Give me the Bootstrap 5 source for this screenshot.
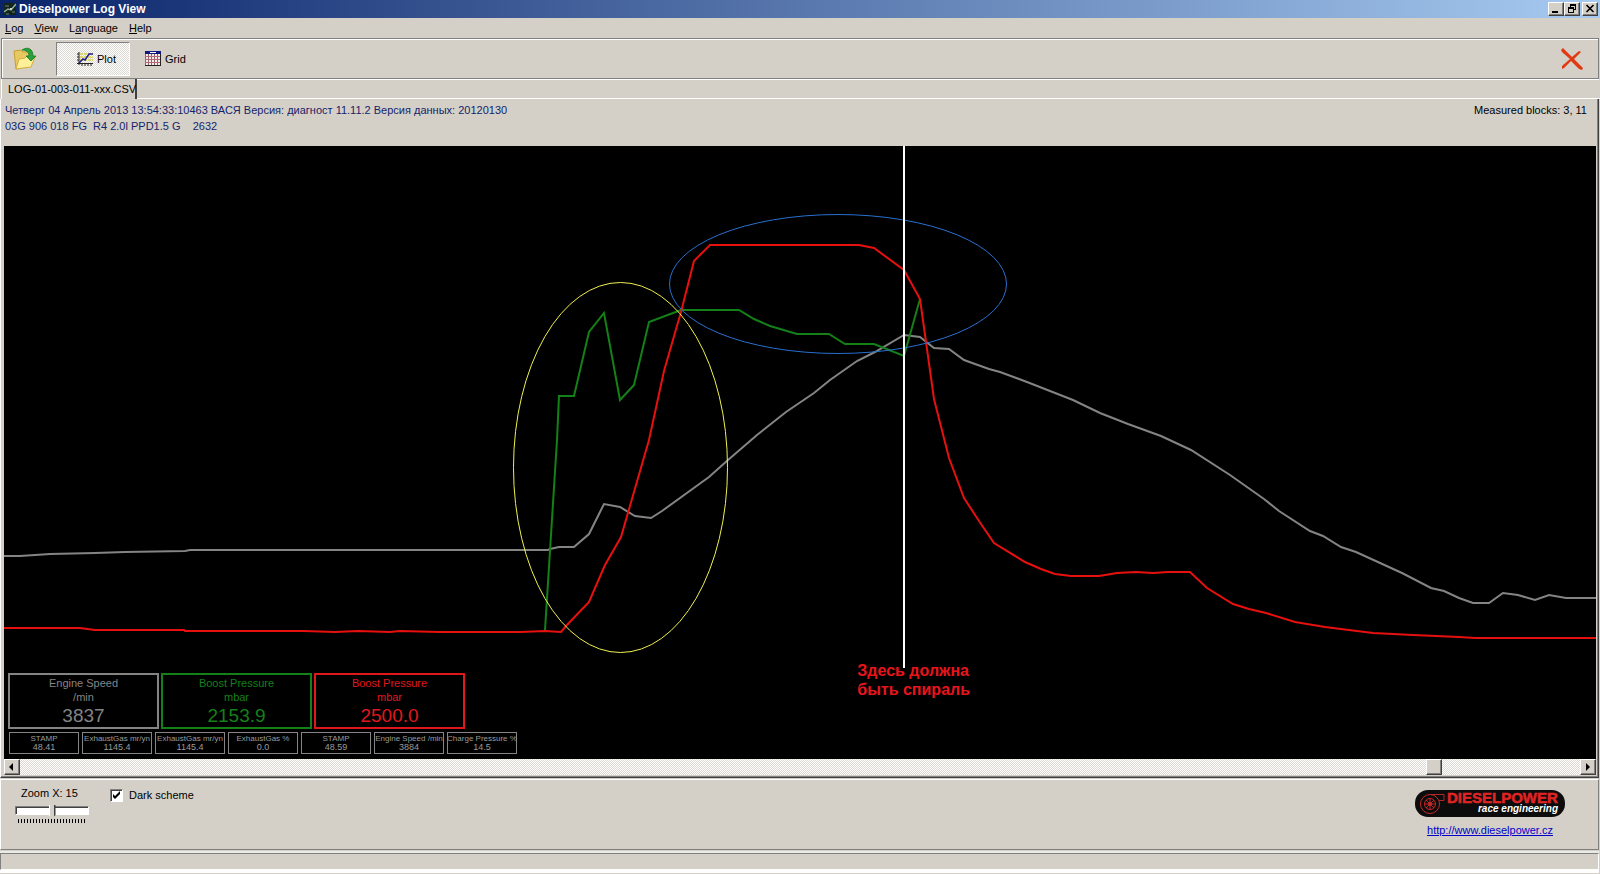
<!DOCTYPE html>
<html lang="en">
<head>
<meta charset="utf-8">
<meta name="viewport" content="width=device-width, initial-scale=1">
<title>Dieselpower Log View</title>
<link href="https://cdn.jsdelivr.net/npm/bootstrap@5.3.0/dist/css/bootstrap.min.css" rel="stylesheet">
<style>
  :root { --face:#d4d0c8; --shade:#808080; --dark:#404040; --navy:#14246a; }
  body { background:var(--face); color:#000; font:11px/16px "Liberation Sans", Arial, sans-serif; }
  button { font:inherit; color:inherit; }
  .titlebar { height:18px; padding:0 2px 0 4px; gap:3px; background:linear-gradient(90deg,#0a246a,#a6caf0); color:#fff; }
  .titlebar h1 { font-size:12px; line-height:18px; font-weight:700; margin:0; }
  .raised { background:var(--face); border:1px solid; border-color:#fff var(--dark) var(--dark) #fff; box-shadow:inset -1px -1px 0 var(--shade); padding:0; border-radius:0; }
  .winbtn { width:16px; height:14px; }
  .winbtn:last-child { margin-left:2px; }
  .menubar { height:20px; padding:0 5px; gap:11px; }
  .menubar a { color:#000; text-decoration:none; line-height:20px; }
  .toolbar { height:41px; margin:0 1px; padding:2px 13px 1px 10px; border:1px solid var(--shade); box-shadow:inset 1px 1px 0 #fff, 0 1px 0 #fff; }
  .toolbtn { height:34px; border:1px solid transparent; background:none; padding:0; gap:4px; }
  .dither { background:repeating-conic-gradient(#fff 0 25%, #dcd9d2 0 50%) 0 0/2px 2px; }
  .toolbtn.pressed { width:74px; margin-left:18px; border-color:var(--shade) #fff #fff var(--shade); }
  .toolbtn.other { margin-left:14px; }
  .tabs { height:20px; padding-left:1px; }
  .filetab { height:20px; width:136px; padding:0 0 0 6px; border:0; border-right:2px solid var(--dark); border-left:1px solid #fff; background:var(--face); text-align:left; line-height:20px; white-space:nowrap; }
  .tabrest { border-bottom:1px solid #fff; }
  .page { padding:0 2px 2px 3px; margin-right:1px; border-left:1px solid #fff; border-right:1px solid var(--dark); border-bottom:1px solid var(--dark); box-shadow:inset -1px -1px 0 var(--shade); }
  .info { height:47px; padding:3px 9px 0 1px; }
  .info pre { font:inherit; color:var(--navy); margin:0; overflow:visible; }
  .plot { background:#000; min-height:400px; overflow:hidden; }
  .plot polyline, .plot ellipse, .plot line { fill:none; vector-effect:non-scaling-stroke; stroke-width:2; }
  .plot ellipse { stroke-width:1; }
  .remark { left:53.6%; top:84%; color:#e8141c; font-size:16px; line-height:19px; font-weight:700; white-space:nowrap; }
  .readouts { left:4px; bottom:5px; gap:3px; }
  .gauges { gap:2px; }
  .minis { gap:3px; padding-left:1px; }
  .gauge { width:151px; height:56px; border:2px solid; text-align:center; line-height:14px; padding-top:1px; }
  .gauge b { display:block; font-size:19px; line-height:23px; font-weight:400; }
  .g-speed { color:#848484; } .g-target { color:#148018; } .g-actual { color:#e0181c; }
  .mini { width:70px; height:22px; border:1px solid #848484; color:#9a9a9a; text-align:center; font-size:8px; line-height:9px; padding-top:1px; white-space:nowrap; }
  .mini div { margin:0 -2px; }
  .mini span { display:block; font-size:9px; }
  .scroller { height:16px; }
  .scroller button { width:16px; height:16px; }
  .controls { min-height:71px; margin:1px 1px 0 0; border:1px solid; border-color:#fff var(--shade) var(--shade) #fff; padding:5px 33px 0 14px; }
  .zoomer { width:74px; }
  .zoomer label { padding-left:6px; }
  .zoomer input { -webkit-appearance:none; appearance:none; display:block; width:74px; height:14px; margin:2px 0 0; background:none; }
  .zoomer input::-webkit-slider-runnable-track { height:9px; background:#fff; border:1px solid; border-color:var(--shade) #fff #fff var(--shade); box-shadow:inset 1px 1px 0 var(--dark); }
  .zoomer input::-webkit-slider-thumb { -webkit-appearance:none; width:7px; height:14px; margin-top:-2px; background:linear-gradient(90deg,#fff 1px,var(--face) 1px 5px,var(--dark) 5px); clip-path:polygon(0 0,100% 0,100% 75%,50% 100%,0 75%); }
  .ticks { height:4px; margin:2px 3px 0; background:repeating-linear-gradient(90deg,#000 0 1px,transparent 1px 3px); }
  .scheme { margin-left:21px; padding-top:2px; gap:6px; height:18px; }
  .scheme input { appearance:none; width:13px; height:13px; margin:0; background:#fff url("data:image/svg+xml,%3Csvg xmlns='http://www.w3.org/2000/svg' viewBox='0 0 11 11'%3E%3Cpath d='M2 4v3l2 2 5-5V1L4 6z'/%3E%3C/svg%3E") center/11px no-repeat; border:1px solid; border-color:var(--shade) #fff #fff var(--shade); box-shadow:inset 1px 1px 0 var(--dark); }
  .brand { margin-top:5px; width:150px; gap:5px; }
  .brand a { color:#0000c8; text-decoration:underline; }
  .status { height:17px; margin:3px 1px 4px 0; border:1px solid; border-color:var(--shade) #fff #fff var(--shade); box-shadow:0 -2px 0 #eceae6, 0 3px 0 #fff; }
</style>
</head>
<body>
<div class="d-flex flex-column min-vh-100">
  <header class="titlebar d-flex align-items-center">
    <svg width="12" height="12" viewBox="0 0 12 12" aria-hidden="true"><path fill="#14241c" d="M0 0h12v12H0z"/><path d="M0 9l4-3 3 1 5-6" stroke="#8fb0a0" fill="none" stroke-width="1.5"/><path d="M1 3h4M2 11h3M8 9h3" stroke="#5c8c78"/><path d="M6 5h2v2H6z" fill="#c8d8c0"/></svg>
    <h1>Dieselpower Log View</h1>
    <div class="d-flex ms-auto">
      <button class="raised winbtn d-flex" aria-label="Minimize"><svg width="14" height="12"><path d="M3 8h6v2H3z"/></svg></button>
      <button class="raised winbtn d-flex" aria-label="Restore"><svg width="14" height="12"><path d="M5 1h6v6H9V6h1V3H6v1H5zM3 4h6v6H3zm1 2v3h4V6z" fill-rule="evenodd"/></svg></button>
      <button class="raised winbtn d-flex" aria-label="Close"><svg width="14" height="12"><path d="M3.500 2l7 7M10.500 2l-7 7" stroke="#000" stroke-width="1.700"/></svg></button>
    </div>
  </header>
  <nav class="menubar d-flex">
    <a href="#"><u>L</u>og</a><a href="#"><u>V</u>iew</a><a href="#">L<u>a</u>nguage</a><a href="#"><u>H</u>elp</a>
  </nav>
  <div class="toolbar d-flex align-items-center">
    <button class="toolbtn d-flex align-items-center" aria-label="Open log">
      <svg width="24" height="24" viewBox="0 0 24 24"><path d="M1 4l7-1 2 2 7 0 1 14-15 3z" fill="#e8c860" stroke="#c8a030"/><path d="M3 22l3-10 6-1 2-2 8 1-4 10z" fill="#fdf098" stroke="#d4ac40"/><path d="M9 3c6-4 11-1 11 6h3l-5 5-5-5h3c0-4-3-6-7-6z" fill="#2aa038" stroke="#187828" stroke-width=".8"/></svg>
    </button>
    <button class="toolbtn pressed dither d-flex align-items-center ps-3">
      <svg class="ms-1" width="16" height="16" viewBox="0 0 16 16"><path d="M3 3h13M3 6h13M3 9h13" stroke="#d8d050" stroke-width="1.500" stroke-dasharray="3 1"/><path d="M2 1v13M0 3h2M0 6h2M0 9h2M0 12.500h16M5 12v3M8 12v3M11 12v3M14 12v3" stroke="#222" fill="none"/><path d="M2 12l4-4 2 1 4-6h4" stroke="#1c1c98" stroke-width="1.500" fill="none"/></svg>Plot
    </button>
    <button class="toolbtn other d-flex align-items-center">
      <svg width="16" height="16" viewBox="0 0 16 16"><path d="M0 0h16v15H0z" fill="#f4eaea"/><path d="M.5 3v11.500h15V3M3.500 3v11M6.500 3v11M9.500 3v11M12.500 3v11" fill="none" stroke="#866"/><path d="M0 5.500h16M0 8.500h16M0 11.500h16" stroke="#b86878"/><path d="M0 0h16v3H0z" fill="#101880"/><path d="M5 1h6v1H5z" fill="#fff"/><path d="M0 14h16v1H0zM15 3h1v12h-1z" fill="#222"/></svg>Grid
    </button>
    <button class="toolbtn d-flex align-items-center ms-auto" aria-label="Close log">
      <svg width="24" height="24" viewBox="0 0 24 24"><path d="M1 3l2-2 9 9 7-6 2 1-7 7 9 9-1 2-3-1-8-8-7 7-2 1v-3l8-7-8-7z" fill="#e03810"/></svg>
    </button>
  </div>
  <div class="tabs d-flex">
    <button class="filetab">LOG-01-003-011-xxx.CSV</button><div class="tabrest flex-grow-1"></div>
  </div>
  <main class="page d-flex flex-column flex-grow-1">
    <div class="info d-flex justify-content-between">
<pre>Четверг 04 Апрель 2013 13:54:33:10463 ВАСЯ Версия: диагност 11.11.2 Версия данных: 20120130
03G 906 018 FG  R4 2.0l PPD1.5 G    2632</pre>
      <span>Measured blocks: 3, 11</span>
    </div>
    <section class="plot position-relative flex-grow-1">
      <svg class="position-absolute w-100 h-100" viewBox="4 146 1592 613" preserveAspectRatio="none" role="img" aria-label="Log plot">
        <polyline stroke="#848484" points="4,556 20,556 35,555 50,554 95,553 125,552 185,551 190,550 548,550 550,549 559,547 574,547 589,534 604,504 620,507 635,516 651,518 662,511 709,477 728,460 757,435 786,412 814,393 830,380 857,361 875,352 904,335 920,337 934,348 949,349 964,360 989,369 1000,372 1027,382 1073,400 1100,413 1128,424 1161,436 1191,450 1230,475 1264,499 1279,511 1310,531 1323,536 1341,547 1356,552 1402,573 1431,588 1444,591 1459,598 1473,603 1489,603 1503,593 1518,595 1535,600 1549,595 1566,598 1596,598"/>
        <polyline stroke="#148018" points="545,630 557,440 559,396 574,396 589,332 604,313 620,400 634,385 649,322 681,310 739,310 754,319 770,326 797,334 829,334 845,344 874,344 904,356 920,299"/>
        <polyline stroke="#e8100f" points="4,628 80,628 95,630 184,630 185,631 304,631 335,632 358,631 390,632 400,631 440,632 520,632 545,631 561,632 566,626 589,602 605,565 621,537 649,440 664,371 681,312 694,261 710,245 859,245 874,248 904,270 920,299 934,399 949,458 964,498 979,521 994,543 1025,562 1041,569 1055,574 1071,576 1099,576 1117,573 1136,572 1153,573 1168,572 1190,572 1207,588 1233,604 1249,609 1266,613 1295,622 1325,627 1373,633 1413,635 1459,637 1475,638 1596,638"/>
        <ellipse cx="620.500" cy="467.500" rx="107" ry="185" stroke="#f0f050"/>
        <ellipse cx="838" cy="284" rx="168.500" ry="69.500" stroke="#2870d0"/>
        <line x1="904" y1="146" x2="904" y2="668" stroke="#fff"/>
      </svg>
      <div class="remark position-absolute">Здесь должна<br>быть спираль</div>
      <div class="readouts position-absolute d-flex flex-column">
        <div class="gauges d-flex">
          <div class="gauge g-speed">Engine Speed<br>/min<b>3837</b></div>
          <div class="gauge g-target">Boost Pressure<br>mbar<b>2153.9</b></div>
          <div class="gauge g-actual">Boost Pressure<br>mbar<b>2500.0</b></div>
        </div>
        <div class="minis d-flex">
          <div class="mini"><div>STAMP</div><span>48.41</span></div>
          <div class="mini"><div>ExhaustGas mr/yn</div><span>1145.4</span></div>
          <div class="mini"><div>ExhaustGas mr/yn</div><span>1145.4</span></div>
          <div class="mini"><div>ExhaustGas %</div><span>0.0</span></div>
          <div class="mini"><div>STAMP</div><span>48.59</span></div>
          <div class="mini"><div>Engine Speed /min</div><span>3884</span></div>
          <div class="mini"><div>Charge Pressure %</div><span>14.5</span></div>
        </div>
      </div>
    </section>
    <div class="scroller dither d-flex">
      <button class="raised d-flex" aria-label="Scroll left"><svg width="14" height="14"><path d="M8 3v8L4 7z"/></svg></button>
      <div class="d-flex flex-grow-1"><div style="width:90.100%"></div><button class="raised" aria-label="Scroll position"></button></div>
      <button class="raised d-flex" aria-label="Scroll right"><svg width="14" height="14"><path d="M5 3v8l4-4z"/></svg></button>
    </div>
  </main>
  <footer>
    <div class="controls d-flex align-items-start">
      <div class="zoomer">
        <label for="zoom" class="d-block">Zoom X: 15</label>
        <input id="zoom" type="range" min="1" max="29" value="15">
        <div class="ticks"></div>
      </div>
      <div class="scheme d-flex align-items-center"><input id="dark" type="checkbox" checked><label for="dark">Dark scheme</label></div>
      <div class="brand ms-auto d-flex flex-column align-items-center">
        <svg width="150" height="27" viewBox="0 0 150 27" role="img" aria-label="Dieselpower race engineering"><rect width="150" height="27" rx="13" fill="#0c0c0c"/><g fill="none" stroke="#c82828"><circle cx="15" cy="14" r="9.500"/><circle cx="15" cy="14" r="5.500"/><circle cx="15" cy="14" r="1.500"/><path d="M15 8.500v11M9.500 14h11M11 10l8 8M19 10l-8 8M16 4.500h13v6h-5" stroke-width=".9"/></g><text x="32" y="13" fill="#e02424" stroke="#e02424" stroke-width=".5" font-weight="700" font-size="15">DIESELPOWER</text><text x="143" y="22" text-anchor="end" fill="#fff" font-weight="700" font-style="italic" font-size="10">race engineering</text></svg>
        <a href="http://www.dieselpower.cz">http://www.dieselpower.cz</a>
      </div>
    </div>
    <div class="status"></div>
  </footer>
</div>
<script src="https://cdn.jsdelivr.net/npm/bootstrap@5.3.0/dist/js/bootstrap.bundle.min.js"></script>
</body>
</html>
